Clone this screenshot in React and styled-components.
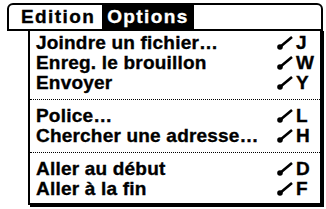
import styled, { createGlobalStyle } from 'styled-components';

const Global = createGlobalStyle`
  html, body {
    margin: 0;
    background: #fff;
  }
  * { box-sizing: border-box; }
`;

const Screen = styled.div`
  width: 326px;
  height: 209px;
  padding: 3px 0 0 7px;
  font-family: "Liberation Sans", Arial, sans-serif;
  font-weight: 700;
  font-size: 19px;
  color: #000;
  -webkit-text-stroke: 0.35px currentColor;
`;

const MenuBar = styled.div`
  display: flex;
  align-items: stretch;
  width: 316px;
  height: 28px;
  border: 2px solid #000;
  border-radius: 6px 6px 0 0;
  padding-left: 7px;
  position: relative;
  z-index: 1;
  background: #fff;
`;

const Title = styled.div`
  display: flex;
  align-items: center;
  padding: 0 5px 0 5px;
  margin-right: 2px;
  letter-spacing: 1.4px;
  background: ${(p) => (p.$active ? '#000' : 'transparent')};
  color: ${(p) => (p.$active ? '#fff' : '#000')};
`;

const Dropdown = styled.div`
  margin: -2px 0 0 21px;
  width: 294px;
  height: 176px;
  border: 2px solid #000;
  border-top: none;
  box-shadow: 2px 2px 0 #000;
  padding: 4px 0 0 6px;
  background: #fff;
`;

const Item = styled.div`
  display: flex;
  align-items: center;
  height: 20px;
  line-height: 20px;
  letter-spacing: 0.2px;
  white-space: nowrap;
`;

const Label = styled.span`
  flex: 1;
`;

const Shortcut = styled.span`
  display: flex;
  align-items: center;
  width: 43px;
  gap: 3px;
`;

const Separator = styled.div`
  height: 13px;
  margin-left: -6px;
  display: flex;
  align-items: center;
  &::after {
    content: '';
    flex: 1;
    border-top: 1px dotted #000;
  }
`;

function Stroke() {
  return (
    <svg width="16" height="14" viewBox="0 0 16 14">
      <line x1="3" y1="11" x2="15" y2="1" stroke="#000" strokeWidth="2.6" />
      <circle cx="3" cy="11" r="2.8" fill="#000" />
    </svg>
  );
}

const groups = [
  [
    ['Joindre un fichier…', 'J'],
    ['Enreg. le brouillon', 'W'],
    ['Envoyer', 'Y'],
  ],
  [
    ['Police…', 'L'],
    ['Chercher une adresse…', 'H'],
  ],
  [
    ['Aller au début', 'D'],
    ['Aller à la fin', 'F'],
  ],
];

export default function App() {
  return (
    <Screen>
      <Global />
      <MenuBar>
        <Title>Edition</Title>
        <Title $active>Options</Title>
      </MenuBar>
      <Dropdown>
        {groups.map((group, gi) => (
          <div key={gi}>
            {gi > 0 && <Separator />}
            {group.map(([label, key]) => (
              <Item key={label}>
                <Label>{label}</Label>
                <Shortcut>
                  <Stroke />
                  {key}
                </Shortcut>
              </Item>
            ))}
          </div>
        ))}
      </Dropdown>
    </Screen>
  );
}
